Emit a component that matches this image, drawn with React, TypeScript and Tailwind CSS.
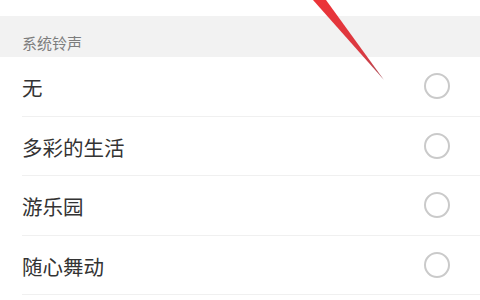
import React from "react";

const items = ["无", "多彩的生活", "游乐园", "随心舞动"];

export default function App() {
  return (
    <div
      className="relative h-[300px] w-[480px] overflow-hidden bg-white"
      style={{ fontFamily: '"Noto Sans CJK SC", "Noto Sans", sans-serif' }}
    >
      <div className="h-[16px] bg-white" />
      <div className="flex h-[41px] items-end bg-[#f2f2f2] pb-[3px] pl-[22px] text-[15px] text-[#7d7d7d]">
        系统铃声
      </div>
      <div>
        {items.map((t) => (
          <div key={t} className="h-[59.5px] pl-[22px]">
            <div className="flex h-full items-center justify-between border-b border-[#f0f0f0] pr-[30px]">
              <span className="pt-[2px] text-[20.5px] leading-none text-[#333333]">{t}</span>
              <span className="h-[26px] w-[26px] rounded-full border-2 border-[#cacaca]" />
            </div>
          </div>
        ))}
      </div>
      <svg
        className="pointer-events-none absolute left-0 top-0"
        width="480"
        height="300"
        viewBox="0 0 480 300"
      >
        <defs>
          <linearGradient id="ar" x1="0" y1="0" x2="0" y2="1">
            <stop offset="0" stopColor="#ec3338" />
            <stop offset="0.7" stopColor="#d83a42" />
            <stop offset="1" stopColor="#a8505a" />
          </linearGradient>
        </defs>
        <polygon points="313,0 326,0 384,80" fill="url(#ar)" />
      </svg>
    </div>
  );
}
